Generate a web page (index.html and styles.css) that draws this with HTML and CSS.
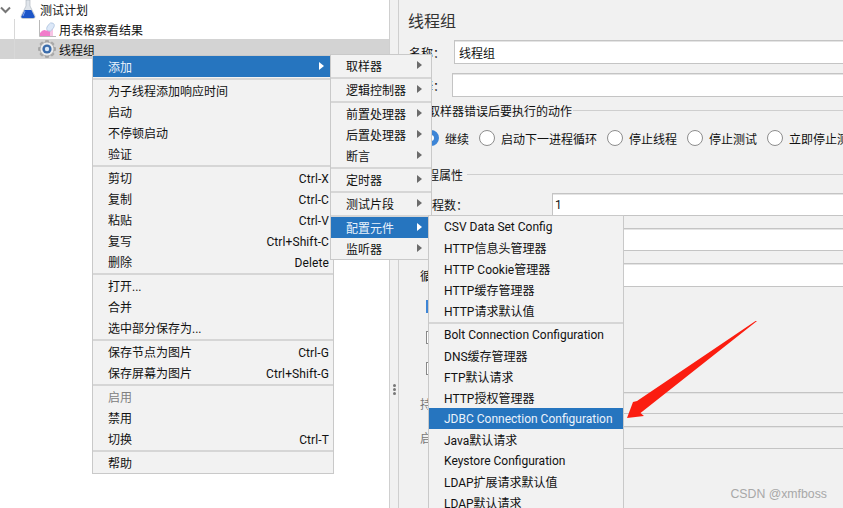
FILE: index.html
```html
<!DOCTYPE html>
<html lang="zh-CN">
<head>
    <meta charset="UTF-8">
    <meta name="viewport" content="width=device-width, initial-scale=1.0">
    <title>线程组</title>
    <link rel="stylesheet" href="styles.css">
</head>
<body>
    <div class="app">
        <!-- Test plan tree -->
        <div class="tree">
            <div class="node root">
                <svg class="chevron" width="12" height="8" viewBox="0 0 12 8"><path d="M1 1.5 L5.500 6 L10 1.5" fill="none" stroke="#777" stroke-width="2"/></svg>
                <svg class="flask" width="16" height="19" viewBox="0 0 16 19">
                    <path d="M6 0 H10 V6 L15 16 Q15.5 18.5 13 18.5 H3 Q.5 18.5 1 16 L6 6 Z" fill="#dfe4ea" stroke="#a8b0ba" stroke-width=".6"/>
                    <path d="M4.6 10 H11.4 L14.6 16.4 Q15 18 13 18 H3 Q1 18 1.4 16.4 Z" fill="#1c55c8"/>
                    <path d="M5 11 L3 16" stroke="#7fa4ee" stroke-width="1"/>
                </svg>
                <span>测试计划</span>
            </div>
            <div class="node child">
                <i class="guide"></i>
                <svg class="node-icon" width="18" height="18" viewBox="0 0 18 18">
                    <path d="M1.5 0 V16.5 H18" fill="none" stroke="#b9b9b9" stroke-width="1"/>
                    <path d="M2 16 V13 Q5 9 8 10.5 Q10 11 12 8 V16 Z" fill="#f17ccb"/>
                    <path d="M12 16 V8 L15 6 V16 Z" fill="#f7c3e4"/>
                    <ellipse cx="12.5" cy="7" rx="3" ry="4.6" transform="rotate(35 12.5 7)" fill="#dce8f8" stroke="#a9bfdc" stroke-width=".7"/>
                </svg>
                <span>用表格察看结果</span>
            </div>
            <div class="node child selected">
                <i class="guide"></i>
                <svg class="node-icon" width="18" height="18" viewBox="0 0 18 18">
                    <g fill="#a9a9a9">
                        <rect x="7" y="0" width="4" height="18" rx="1"/>
                        <rect x="7" y="0" width="4" height="18" rx="1" transform="rotate(45 9 9)"/>
                        <rect x="7" y="0" width="4" height="18" rx="1" transform="rotate(90 9 9)"/>
                        <rect x="7" y="0" width="4" height="18" rx="1" transform="rotate(135 9 9)"/>
                    </g>
                    <circle cx="9" cy="9" r="7" fill="#ececec" stroke="#9a9a9a" stroke-width=".7"/>
                    <circle cx="9" cy="9" r="4.600" fill="#3a6cab"/>
                    <circle cx="9" cy="9" r="2.200" fill="#dbe8f6"/>
                </svg>
                <span>线程组</span>
            </div>
        </div>

        <div class="splitter"><i></i><i></i><i></i></div>

        <!-- Thread group form -->
        <div class="form">
            <div class="form-title">线程组</div>
            <div class="field name-field"><label>名称：</label><div class="input">线程组</div></div>
            <div class="field comment-field"><label>注释：</label><div class="input"></div></div>

            <div class="group-title error-title"><span>在取样器错误后要执行的动作</span><i></i></div>
            <div class="radios">
                <span class="radio checked"></span><span>继续</span>
                <span class="radio"></span><span>启动下一进程循环</span>
                <span class="radio"></span><span>停止线程</span>
                <span class="radio"></span><span>停止测试</span>
                <span class="radio"></span><span>立即停止测试</span>
            </div>

            <div class="group-title props-title"><span>线程属性</span><i></i></div>
            <div class="prop prop-threads"><label>线程数：</label><div class="input">1</div></div>
            <div class="prop prop-ramp"><label>Ramp-Up时间(秒)：</label><div class="input"></div></div>
            <div class="prop prop-loop"><label>循环次数</label><div class="input"></div></div>
            <div class="check check-first"><span class="box on"></span></div>
            <div class="check"><span class="box"></span></div>
            <div class="check"><span class="box"></span></div>
            <div class="prop prop-duration off"><label>持续时间（秒）</label><div class="input"></div></div>
            <div class="prop prop-delay off"><label>启动延迟（秒）</label><div class="input"></div></div>
        </div>
    </div>

    <!-- Context menu -->
    <div class="menu menu-main">
        <div class="item active sub">添加</div>
        <div class="sep"></div>
        <div class="item">为子线程添加响应时间</div>
        <div class="item">启动</div>
        <div class="item">不停顿启动</div>
        <div class="item">验证</div>
        <div class="sep"></div>
        <div class="item">剪切<kbd>Ctrl-X</kbd></div>
        <div class="item">复制<kbd>Ctrl-C</kbd></div>
        <div class="item">粘贴<kbd>Ctrl-V</kbd></div>
        <div class="item">复写<kbd>Ctrl+Shift-C</kbd></div>
        <div class="item">删除<kbd>Delete</kbd></div>
        <div class="sep"></div>
        <div class="item">打开...</div>
        <div class="item">合并</div>
        <div class="item">选中部分保存为...</div>
        <div class="sep"></div>
        <div class="item">保存节点为图片<kbd>Ctrl-G</kbd></div>
        <div class="item">保存屏幕为图片<kbd>Ctrl+Shift-G</kbd></div>
        <div class="sep"></div>
        <div class="item disabled">启用</div>
        <div class="item">禁用</div>
        <div class="item">切换<kbd>Ctrl-T</kbd></div>
        <div class="sep"></div>
        <div class="item">帮助</div>
    </div>

    <div class="menu menu-add">
        <div class="item sub">取样器</div>
        <div class="sep"></div>
        <div class="item sub">逻辑控制器</div>
        <div class="sep"></div>
        <div class="item sub">前置处理器</div>
        <div class="item sub">后置处理器</div>
        <div class="item sub">断言</div>
        <div class="sep"></div>
        <div class="item sub">定时器</div>
        <div class="sep"></div>
        <div class="item sub">测试片段</div>
        <div class="sep"></div>
        <div class="item active sub">配置元件</div>
        <div class="item sub">监听器</div>
    </div>

    <div class="menu menu-config">
        <div class="item">CSV Data Set Config</div>
        <div class="item">HTTP信息头管理器</div>
        <div class="item">HTTP Cookie管理器</div>
        <div class="item">HTTP缓存管理器</div>
        <div class="item">HTTP请求默认值</div>
        <div class="sep"></div>
        <div class="item">Bolt Connection Configuration</div>
        <div class="item">DNS缓存管理器</div>
        <div class="item">FTP默认请求</div>
        <div class="item">HTTP授权管理器</div>
        <div class="item active">JDBC Connection Configuration</div>
        <div class="item">Java默认请求</div>
        <div class="item">Keystore Configuration</div>
        <div class="item">LDAP扩展请求默认值</div>
        <div class="item">LDAP默认请求</div>
    </div>

    <svg class="callout" width="843" height="508" viewBox="0 0 843 508">
        <path d="M757 321 L755.500 321 L637 401 L633 402 L627 418 L644 416 L640.500 413 Z" fill="#fb1d10"/>
    </svg>

    <div class="watermark">CSDN @xmfboss</div>
</body>
</html>
```

FILE: styles.css
```css
html, body {
    margin: 0;
    height: 100%;
    overflow: hidden;
}
body {
    position: relative;
    font-family: Roboto, "Noto Sans CJK SC", sans-serif;
    font-size: 12px;
    color: #111;
    background-color: #f1f1f1;
}
.app {
    display: flex;
    height: 508px;
}

/* Tree */
.tree {
    width: 389px;
    background-color: #fff;
    border-right: 1px solid #cfcfcf;
}
.node {
    display: flex;
    align-items: center;
    height: 20px;
}
.root {
    height: 19px;
}
.chevron {
    width: 12px;
}
.flask {
    margin-left: 8px;
    margin-right: 4px;
}
.guide {
    width: 1px;
    height: 100%;
    margin-left: 14px;
    background-color: #d8d8d8;
}
.node-icon {
    margin-left: 23px;
    margin-right: 3px;
}
.selected {
    background-color: #d3d3d3;
}

.splitter {
    width: 8px;
    display: flex;
    flex-direction: column;
    align-items: center;
    justify-content: center;
    gap: 1px;
    padding-top: 270px;
    box-sizing: border-box;
    height: 508px;
}
.splitter i {
    width: 3px;
    height: 3px;
    border-radius: 50%;
    background-color: #777;
}

/* Form */
.form {
    flex: 1;
    min-width: 0;
    border-left: 1px solid #cfcfcf;
}
.form-title {
    font-size: 16px;
    line-height: 24px;
    margin: 10px 0 0 9px;
    color: #333;
}
.input {
    box-sizing: border-box;
    flex: 1;
    display: flex;
    align-items: center;
    background-color: #fff;
    border: 1px solid #c4c4c4;
    border-right: none;
    box-shadow: inset 0 1px 0 #e4e4e4;
    padding-left: 4px;
}
.field {
    display: flex;
    align-items: stretch;
    height: 24px;
    margin-top: 9px;
    margin-left: 10px;
}
.field label {
    display: flex;
    align-items: center;
}
.name-field {
    margin-top: 6px;
}
.name-field label {
    width: 45px;
}
.comment-field label {
    width: 43px;
}

.group-title {
    display: flex;
    align-items: center;
    height: 20px;
    margin-left: 17px;
    gap: 1px;
}
.group-title i {
    flex: 1;
    height: 1px;
    background-color: #cfcfcf;
}
.error-title {
    margin-top: 3px;
}
.props-title {
    margin-top: 16px;
    margin-left: 16px;
    gap: 4px;
}

.radios {
    display: flex;
    align-items: center;
    white-space: nowrap;
    height: 20px;
    margin-top: 8px;
    margin-left: 24px;
}
.radios span:nth-child(even) {
    margin-left: 6px;
    margin-right: 10px;
}
.radio {
    box-sizing: border-box;
    flex: none;
    width: 16px;
    height: 16px;
    border-radius: 50%;
    background-color: #fff;
    border: 1px solid #8d8d8d;
}
.radio.checked {
    background-color: #fff;
    border: 5px solid #3d85d6;
}

.prop {
    display: flex;
    margin-top: 12px;
    margin-left: 21px;
    height: 23px;
}
.prop label {
    display: flex;
    align-items: center;
    width: 132px;
    flex: none;
    white-space: nowrap;
}
.prop .input {
    padding-left: 2px;
}
.prop-threads {
    margin-top: 9px;
}
.prop-loop {
    height: 24px;
}
.off label {
    color: #777;
}
.off .input {
    background-color: transparent;
}
.prop-duration {
    margin-top: 17px;
    height: 22px;
}

.check {
    height: 13px;
    margin-top: 18px;
    margin-left: 27px;
}
.check-first {
    margin-top: 13px;
}
.box {
    display: block;
    box-sizing: border-box;
    width: 13px;
    height: 13px;
    background-color: #fff;
    border: 1px solid #888;
}
.box.on {
    background-color: #3d85d6;
    border-color: #3d85d6;
}

/* Popup menus */
.menu {
    position: absolute;
    box-sizing: border-box;
    background-color: #f2f2f2;
    border: 1px solid #c9c9c9;
}
.menu-main {
    left: 92px;
    top: 55px;
    width: 242px;
}
.menu-add {
    left: 330px;
    top: 54px;
    width: 102px;
}
.menu-config {
    left: 428px;
    top: 215px;
    width: 196px;
}
.item {
    position: relative;
    display: flex;
    align-items: center;
    justify-content: space-between;
    height: 21px;
    padding: 0 4px 0 15px;
    white-space: nowrap;
}
.item kbd {
    font-family: inherit;
    font-size: 12px;
    letter-spacing: .1px;
    padding-top: 2px;
}
.active {
    background-color: #2675bf;
    color: #eaf2fb;
}
.disabled {
    color: #808080;
}
.sub::after {
    content: "";
    position: absolute;
    right: 9px;
    top: 6px;
    border-left: 5px solid #6b6b6b;
    border-top: 4.500px solid transparent;
    border-bottom: 4.500px solid transparent;
}
.active.sub::after {
    border-left-color: #fff;
}
.sep {
    height: 2px;
    margin-top: 1px;
    background-color: #d6d6d6;
}

.callout {
    position: absolute;
    left: 0;
    top: 0;
    pointer-events: none;
}
.watermark {
    position: absolute;
    right: 16px;
    top: 486px;
    font-family: "Liberation Sans", sans-serif;
    font-size: 12.300px;
    line-height: 16px;
    color: #a8a8a8;
}
```
